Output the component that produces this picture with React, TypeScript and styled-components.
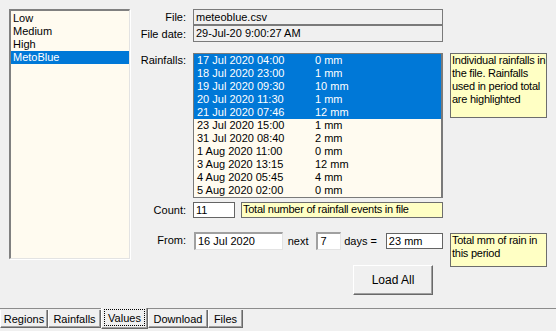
import styled, { createGlobalStyle } from "styled-components";

const GlobalStyle = createGlobalStyle`
  html, body {
    margin: 0;
    padding: 0;
    background: #f0f0f0;
  }
  * { box-sizing: border-box; }
`;

// window frame
const Window = styled.div`
  width: 556px;
  height: 331px;
  display: flex;
  flex-direction: column;
  background: #f0f0f0;
  font-family: "Liberation Sans", Arial, sans-serif;
  font-size: 11px;
  color: #000;
  overflow: hidden;
`;

const Body = styled.div`
  height: 308px;
  display: flex;
  align-items: flex-start;
  padding: 9px 0 0 9px;
`;

const RegionList = styled.ul`
  width: 121px;
  height: 250px;
  margin: 0;
  padding: 1px 0 0 0;
  list-style: none;
  background: #fffbf0;
  border-top: 2px solid #808080;
  border-left: 2px solid #808080;
  border-right: 1px solid #e3e3e3;
  border-bottom: 1px solid #e3e3e3;
  box-shadow: 1px 1px 0 #fff;
`;

const ListItem = styled.li<{ $selected?: boolean }>`
  height: 13px;
  line-height: 13px;
  padding-left: 2px;
  white-space: nowrap;
  background: ${(p) => (p.$selected ? "#0078d7" : "transparent")};
  color: ${(p) => (p.$selected ? "#fff" : "#000")};
`;

const Panel = styled.div`
  margin-left: 10px;
  display: flex;
  flex-direction: column;
`;

const FormRow = styled.div<{ $top?: number; $align?: string }>`
  display: grid;
  grid-template-columns: 46px 250px 97px;
  column-gap: 7px;
  align-items: ${(p) => p.$align ?? "center"};
  margin-top: ${(p) => p.$top ?? 0}px;
`;

const Label = styled.div<{ $pad?: number }>`
  text-align: right;
  white-space: nowrap;
  padding-top: ${(p) => p.$pad ?? 0}px;
`;

const StaticField = styled.div<{ $h?: number }>`
  height: ${(p) => p.$h ?? 16}px;
  line-height: ${(p) => (p.$h ?? 16) - 2}px;
  border: 1px solid #7a7a7a;
  padding-left: 2px;
  white-space: nowrap;
`;

const RainList = styled.div`
  height: 145px;
  border: 1px solid #7a7a7a;
  border-right: 2px solid #7a7a7a;
  background: #fffbf0;
`;

const RainRow = styled.div<{ $selected?: boolean }>`
  height: 13px;
  line-height: 13px;
  display: flex;
  white-space: nowrap;
  background: ${(p) => (p.$selected ? "#0078d7" : "transparent")};
  color: ${(p) => (p.$selected ? "#fff" : "#000")};
`;

const RainDate = styled.span`
  width: 121px;
  padding-left: 3px;
`;

const Hint = styled.div<{ $w?: number; $h: number; $left?: number; $top?: number }>`
  width: ${(p) => (p.$w ? `${p.$w}px` : "auto")};
  height: ${(p) => p.$h}px;
  margin-left: ${(p) => p.$left ?? 0}px;
  margin-top: ${(p) => p.$top ?? 0}px;
  background: #ffffc4;
  border: 1px solid #6d6d6d;
  padding: 0 0 0 1px;
  line-height: 13px;
  letter-spacing: -0.25px;
  overflow: hidden;
`;

const Line = styled.div`
  display: flex;
  align-items: center;
`;

const Input = styled.div<{ $w: number; $flat?: boolean; $left?: number }>`
  width: ${(p) => p.$w}px;
  height: ${(p) => (p.$flat ? 16 : 18)}px;
  line-height: 14px;
  margin-left: ${(p) => p.$left ?? 0}px;
  background: #fff;
  padding-left: 2px;
  white-space: nowrap;
  ${(p) =>
    p.$flat
      ? `border: 1px solid #646464;`
      : `border-top: 2px solid #a0a0a0;
         border-left: 2px solid #a0a0a0;
         border-right: 1px solid #e3e3e3;
         border-bottom: 1px solid #e3e3e3;`}
`;

const Caption = styled.span<{ $left: number }>`
  margin-left: ${(p) => p.$left}px;
  white-space: nowrap;
`;

const Button = styled.button`
  width: 80px;
  height: 30px;
  margin-left: 160px;
  background: #f0f0f0;
  font-family: inherit;
  font-size: 12px;
  color: #000;
  padding: 0;
  border-top: 1px solid #fff;
  border-left: 1px solid #fff;
  border-right: 1px solid #696969;
  border-bottom: 1px solid #696969;
  box-shadow: inset -1px -1px 0 #a0a0a0;
`;

// bottom tab strip
const TabBar = styled.div`
  height: 23px;
  display: flex;
  align-items: flex-start;
  border-top: 1px solid #8c8c8c;
`;

const Tab = styled.div<{ $active?: boolean; $w: number }>`
  width: ${(p) => p.$w}px;
  height: ${(p) => (p.$active ? 21 : 18)}px;
  margin-top: ${(p) => (p.$active ? -1 : 1)}px;
  display: flex;
  align-items: center;
  justify-content: center;
  background: #f0f0f0;
  border-left: 1px solid #fff;
  border-right: 1px solid #696969;
  border-bottom: 1px solid #696969;
  box-shadow: inset -1px -1px 0 #a0a0a0;
  padding: ${(p) => (p.$active ? "1px 2px 2px" : "0")};
`;

const Focus = styled.span`
  flex: 1;
  align-self: stretch;
  display: flex;
  align-items: center;
  justify-content: center;
  border: 1px dotted #000;
`;

const regions = ["Low", "Medium", "High", "MetoBlue"];

const rainfalls: [string, string][] = [
  ["17 Jul 2020 04:00", "0 mm"],
  ["18 Jul 2020 23:00", "1 mm"],
  ["19 Jul 2020 09:30", "10 mm"],
  ["20 Jul 2020 11:30", "1 mm"],
  ["21 Jul 2020 07:46", "12 mm"],
  ["23 Jul 2020 15:00", "1 mm"],
  ["31 Jul 2020 08:40", "2 mm"],
  ["1 Aug 2020 11:00", "0 mm"],
  ["3 Aug 2020 13:15", "12 mm"],
  ["4 Aug 2020 05:45", "4 mm"],
  ["5 Aug 2020 02:00", "0 mm"],
];

const tabs: [string, number][] = [
  ["Regions", 48],
  ["Rainfalls", 53],
  ["Values", 47],
  ["Download", 60],
  ["Files", 35],
];

export default function App() {
  return (
    <>
      <GlobalStyle />
      <Window>
        <Body>
          <RegionList>
            {regions.map((r) => (
              <ListItem key={r} $selected={r === "MetoBlue"}>
                {r}
              </ListItem>
            ))}
          </RegionList>

          <Panel>
            <FormRow>
              <Label>File:</Label>
              <StaticField>meteoblue.csv</StaticField>
            </FormRow>
            <FormRow>
              <Label>File date:</Label>
              <StaticField $h={17}>29-Jul-20 9:00:27 AM</StaticField>
            </FormRow>

            <FormRow $top={11} $align="start">
              <Label $pad={1}>Rainfalls:</Label>
              <RainList>
                {rainfalls.map(([d, mm], i) => (
                  <RainRow key={d} $selected={i < 5}>
                    <RainDate>{d}</RainDate>
                    <span>{mm}</span>
                  </RainRow>
                ))}
              </RainList>
              <Hint $h={65}>
                Individual rainfalls in the file. Rainfalls used in period total are highlighted
              </Hint>
            </FormRow>

            <FormRow $top={4}>
              <Label>Count:</Label>
              <Line>
                <Input $w={42} $flat>11</Input>
                <Hint $w={202} $h={16} $left={6}>
                  Total number of rainfall events in file
                </Hint>
              </Line>
            </FormRow>

            <FormRow $top={14} $align="start">
              <Label $pad={2}>From:</Label>
              <Line>
                <Input $w={90} $left={1}>16 Jul 2020</Input>
                <Caption $left={5}>next</Caption>
                <Input $w={25} $left={8}>7</Input>
                <Caption $left={3}>days =</Caption>
                <Input $w={58} $flat $left={9}>23 mm</Input>
              </Line>
              <Hint $h={34} $top={1}>
                Total mm of rain in this period
              </Hint>
            </FormRow>

            <FormRow $top={-2}>
              <span />
              <Button>Load All</Button>
            </FormRow>
          </Panel>
        </Body>

        <TabBar>
          {tabs.map(([t, w]) =>
            t === "Values" ? (
              <Tab key={t} $w={w} $active>
                <Focus>{t}</Focus>
              </Tab>
            ) : (
              <Tab key={t} $w={w}>
                {t}
              </Tab>
            )
          )}
        </TabBar>
      </Window>
    </>
  );
}
